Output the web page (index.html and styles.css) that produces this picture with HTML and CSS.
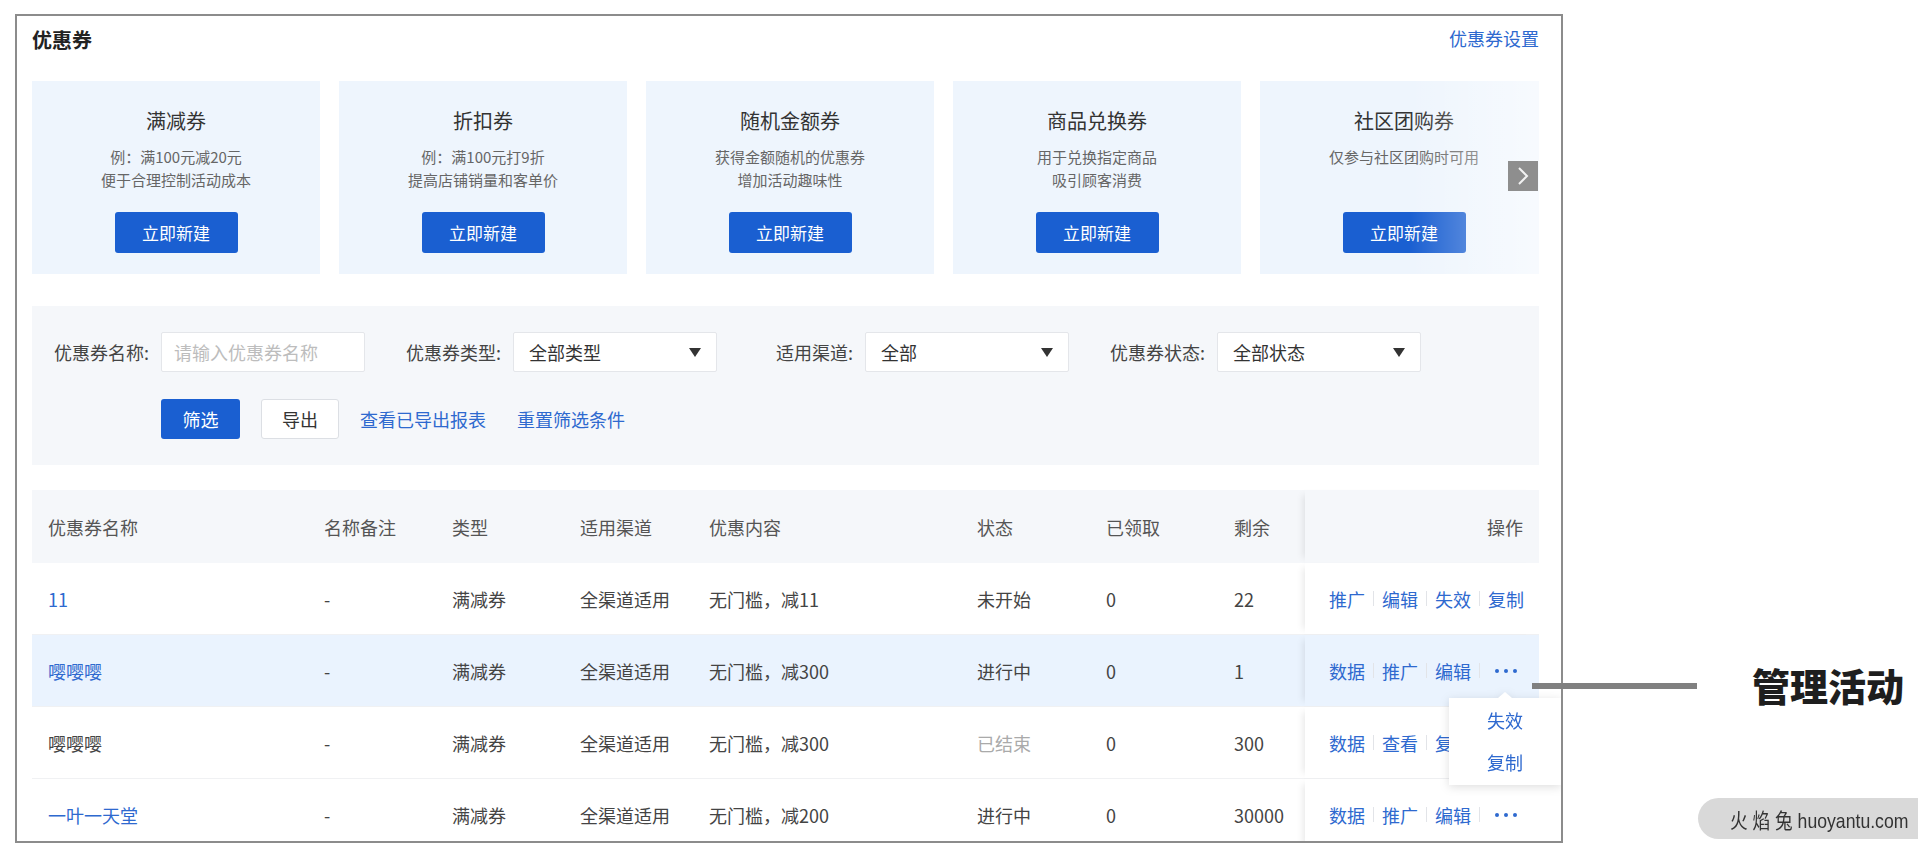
FILE: index.html
```html
<!DOCTYPE html>
<html lang="zh-CN">
<head>
<meta charset="utf-8">
<title>优惠券</title>
<link rel="stylesheet" href="styles.css">
</head>
<body>
<div class="frame">
  <div class="topbar">
    <h1 class="title">优惠券</h1>
    <a class="link setting">优惠券设置</a>
  </div>

  <div class="carousel">
    <div class="track">
      <div class="card">
        <div class="card-title">满减券</div>
        <div class="card-desc">例：满100元减20元<br>便于合理控制活动成本</div>
        <button class="btn card-btn">立即新建</button>
      </div>
      <div class="card">
        <div class="card-title">折扣券</div>
        <div class="card-desc">例：满100元打9折<br>提高店铺销量和客单价</div>
        <button class="btn card-btn">立即新建</button>
      </div>
      <div class="card">
        <div class="card-title">随机金额券</div>
        <div class="card-desc">获得金额随机的优惠券<br>增加活动趣味性</div>
        <button class="btn card-btn">立即新建</button>
      </div>
      <div class="card">
        <div class="card-title">商品兑换券</div>
        <div class="card-desc">用于兑换指定商品<br>吸引顾客消费</div>
        <button class="btn card-btn">立即新建</button>
      </div>
      <div class="card">
        <div class="card-title">社区团购券</div>
        <div class="card-desc">仅参与社区团购时可用</div>
        <button class="btn card-btn">立即新建</button>
      </div>
    </div>
    <div class="fade"></div>
    <button class="next" aria-label="下一页">
      <svg width="30" height="30" viewBox="0 0 30 30"><path d="M11 7 L19 15 L11 23" fill="none" stroke="#f2f2f2" stroke-width="2"/></svg>
    </button>
  </div>

  <div class="filter">
    <div class="filter-row">
      <div class="field">
        <label class="field-label">优惠券名称:</label>
        <div class="input placeholder">请输入优惠券名称</div>
      </div>
      <div class="field">
        <label class="field-label">优惠券类型:</label>
        <div class="input select"><span>全部类型</span><svg class="caret" width="12" height="9" viewBox="0 0 12 9"><polygon points="0,0 12,0 6,9" fill="#333"/></svg></div>
      </div>
      <div class="field">
        <label class="field-label">适用渠道:</label>
        <div class="input select"><span>全部</span><svg class="caret" width="12" height="9" viewBox="0 0 12 9"><polygon points="0,0 12,0 6,9" fill="#333"/></svg></div>
      </div>
      <div class="field">
        <label class="field-label">优惠券状态:</label>
        <div class="input select"><span>全部状态</span><svg class="caret" width="12" height="9" viewBox="0 0 12 9"><polygon points="0,0 12,0 6,9" fill="#333"/></svg></div>
      </div>
    </div>
    <div class="filter-actions">
      <button class="btn btn-filter">筛选</button>
      <button class="btn-plain">导出</button>
      <a class="link">查看已导出报表</a>
      <a class="link reset">重置筛选条件</a>
    </div>
  </div>

  <div class="table">
    <div class="tr th">
      <div class="td">优惠券名称</div>
      <div class="td">名称备注</div>
      <div class="td">类型</div>
      <div class="td">适用渠道</div>
      <div class="td">优惠内容</div>
      <div class="td">状态</div>
      <div class="td">已领取</div>
      <div class="td">剩余</div>
      <div class="td op op-head">操作</div>
    </div>
    <div class="tr">
      <div class="td"><a class="link">11</a></div>
      <div class="td">-</div>
      <div class="td">满减券</div>
      <div class="td">全渠道适用</div>
      <div class="td">无门槛，减11</div>
      <div class="td">未开始</div>
      <div class="td">0</div>
      <div class="td">22</div>
      <div class="td op"><a class="link">推广</a><i class="sep"></i><a class="link">编辑</a><i class="sep"></i><a class="link">失效</a><i class="sep"></i><a class="link">复制</a></div>
    </div>
    <div class="tr active">
      <div class="td"><a class="link">嘤嘤嘤</a></div>
      <div class="td">-</div>
      <div class="td">满减券</div>
      <div class="td">全渠道适用</div>
      <div class="td">无门槛，减300</div>
      <div class="td">进行中</div>
      <div class="td">0</div>
      <div class="td">1</div>
      <div class="td op"><a class="link">数据</a><i class="sep"></i><a class="link">推广</a><i class="sep"></i><a class="link">编辑</a><i class="sep"></i><span class="more"><b></b><b></b><b></b></span></div>
    </div>
    <div class="tr">
      <div class="td">嘤嘤嘤</div>
      <div class="td">-</div>
      <div class="td">满减券</div>
      <div class="td">全渠道适用</div>
      <div class="td">无门槛，减300</div>
      <div class="td muted">已结束</div>
      <div class="td">0</div>
      <div class="td">300</div>
      <div class="td op"><a class="link">数据</a><i class="sep"></i><a class="link">查看</a><i class="sep"></i><a class="link">复制</a></div>
    </div>
    <div class="tr">
      <div class="td"><a class="link">一叶一天堂</a></div>
      <div class="td">-</div>
      <div class="td">满减券</div>
      <div class="td">全渠道适用</div>
      <div class="td">无门槛，减200</div>
      <div class="td">进行中</div>
      <div class="td">0</div>
      <div class="td">30000</div>
      <div class="td op"><a class="link">数据</a><i class="sep"></i><a class="link">推广</a><i class="sep"></i><a class="link">编辑</a><i class="sep"></i><span class="more"><b></b><b></b><b></b></span></div>
    </div>
  </div>

  <div class="dropdown">
    <a class="link dd-item">失效</a>
    <a class="link dd-item">复制</a>
  </div>
</div>

<div class="connector"></div>
<div class="callout">管理活动</div>
<div class="watermark"><span>火 焰 兔 huoyantu.com</span></div>
</body>
</html>
```

FILE: styles.css
```css
html, body {
  margin: 0;
  padding: 0;
}
body {
  width: 1918px;
  height: 854px;
  overflow: hidden;
  position: relative;
  background: #fff;
  font-family: "Noto Sans CJK SC", "Noto Sans", sans-serif;
  color: #444;
}
button {
  font-family: inherit;
  cursor: pointer;
}

.frame {
  position: relative;
  box-sizing: border-box;
  margin: 14px 0 0 15px;
  width: 1548px;
  height: 829px;
  border: 2px solid #8c8c8c;
  padding: 10px 22px 0 15px;
  overflow: hidden;
  background: #fff;
}

.link {
  color: #2e69cf;
  text-decoration: none;
}

/* top bar */
.topbar {
  display: flex;
  justify-content: space-between;
  align-items: center;
  height: 28px;
}
.title {
  margin: 0;
  font-size: 20px;
  line-height: 28px;
  font-weight: 700;
  color: #222;
}
.setting {
  font-size: 18px;
  line-height: 24px;
  margin-top: -4px;
}

/* cards */
.carousel {
  position: relative;
  margin-top: 27px;
  height: 193px;
  overflow: hidden;
}
.track {
  display: flex;
  gap: 19px;
}
.card {
  flex: 0 0 288px;
  box-sizing: border-box;
  height: 193px;
  background: #eef5fd;
  padding-top: 26px;
  text-align: center;
}
.card-title {
  font-size: 20px;
  line-height: 28px;
  color: #333;
}
.card-desc {
  margin-top: 10px;
  height: 46px;
  font-size: 15px;
  line-height: 23px;
  color: #666;
}
.btn {
  border: none;
  background: #1a5fd1;
  color: #fff;
  border-radius: 3px;
}
.card-btn {
  margin-top: 21px;
  width: 123px;
  height: 41px;
  font-size: 17px;
  padding: 0;
}
.fade {
  position: absolute;
  top: 0;
  right: 0;
  width: 130px;
  height: 100%;
  background: linear-gradient(to right, rgba(255,255,255,0), rgba(255,255,255,0.55));
  pointer-events: none;
}
.next {
  position: absolute;
  right: 1px;
  top: 80px;
  width: 30px;
  height: 30px;
  padding: 0;
  border: none;
  background: #8e8e8e;
  display: flex;
  align-items: center;
  justify-content: center;
}
.next svg {
  display: block;
}

/* filter */
.filter {
  margin-top: 32px;
  box-sizing: border-box;
  height: 159px;
  background: #f5f7fa;
  padding: 26px 20px 0 19px;
}
.filter-row {
  display: flex;
  gap: 38px;
  height: 40px;
}
.field {
  display: flex;
  align-items: center;
}
.field-label {
  width: 98px;
  margin-right: 12px;
  text-align: right;
  font-size: 18px;
  color: #444;
  white-space: nowrap;
}
.input {
  box-sizing: border-box;
  width: 204px;
  height: 40px;
  background: #fff;
  border: 1px solid #e4e6ea;
  border-radius: 2px;
  display: flex;
  align-items: center;
  font-size: 18px;
}
.placeholder {
  padding: 0 12px;
  color: #bdbdbd;
}
.select {
  padding: 0 15px;
  justify-content: space-between;
  color: #333;
}
.caret {
  display: block;
}
.filter-actions {
  margin-top: 27px;
  padding-left: 110px;
  display: flex;
  align-items: center;
  gap: 21px;
  font-size: 18px;
}
.btn-filter {
  width: 79px;
  height: 40px;
  font-size: 18px;
  padding: 0;
}
.btn-plain {
  width: 78px;
  height: 40px;
  padding: 0;
  font-size: 18px;
  color: #333;
  background: #fff;
  border: 1px solid #dcdfe4;
  border-radius: 3px;
}
.reset {
  margin-left: 10px;
}

/* table */
.table {
  margin-top: 25px;
  font-size: 18px;
}
.tr {
  display: grid;
  grid-template-columns: 276px 128px 128px 129px 268px 129px 128px 87px 234px;
  height: 72px;
  box-sizing: border-box;
  border-bottom: 1px solid #f0f1f3;
  background: #fff;
  color: #444;
}
.tr.th {
  height: 73px;
  border-bottom: none;
  background: #f5f7fa;
  color: #555;
}
.tr.active {
  background: #eaf3fe;
}
.td {
  display: flex;
  align-items: center;
  padding-left: 16px;
  white-space: nowrap;
}
.muted {
  color: #aaa;
}
.op {
  position: relative;
  background: inherit;
  padding-left: 24px;
  box-shadow: -7px 0 7px -5px rgba(0, 0, 0, 0.09);
}
.op-head {
  justify-content: flex-end;
  padding-right: 16px;
}
.sep {
  display: inline-block;
  width: 1px;
  height: 15px;
  margin: 0 8px;
  background: #e2e4e8;
}
.more {
  display: inline-flex;
  gap: 5px;
  padding-left: 7px;
}
.more b {
  display: block;
  width: 4px;
  height: 4px;
  border-radius: 50%;
  background: #2e69cf;
}

/* dropdown */
.dropdown {
  position: absolute;
  left: 1432px;
  top: 682px;
  width: 112px;
  box-sizing: border-box;
  padding: 1px 0 2px;
  background: #fff;
  filter: drop-shadow(0 2px 5px rgba(0, 0, 0, 0.13));
  font-size: 18px;
}
.dropdown::before {
  content: "";
  position: absolute;
  top: -6px;
  left: 49px;
  border-left: 7px solid transparent;
  border-right: 7px solid transparent;
  border-bottom: 6px solid #fff;
}
.dd-item {
  display: block;
  height: 42px;
  line-height: 42px;
  text-align: center;
}

/* annotation */
.connector {
  position: absolute;
  left: 1532px;
  top: 683px;
  width: 165px;
  height: 6px;
  background: #808080;
}
.callout {
  position: absolute;
  left: 1752px;
  top: 663px;
  font-size: 38px;
  line-height: 44px;
  font-weight: 900;
  color: #1e1e1e;
  white-space: nowrap;
}
.watermark {
  position: absolute;
  left: 1698px;
  top: 798px;
  width: 220px;
  height: 41px;
  border-radius: 21px 0 0 21px;
  background: #d9d9d9;
  display: flex;
  align-items: center;
}
.watermark span {
  display: inline-block;
  margin-left: 32px;
  font-family: "Liberation Sans", "Noto Sans CJK SC", sans-serif;
  font-size: 21px;
  color: #333;
  white-space: nowrap;
  transform: scaleX(0.84);
  transform-origin: left center;
}
```
